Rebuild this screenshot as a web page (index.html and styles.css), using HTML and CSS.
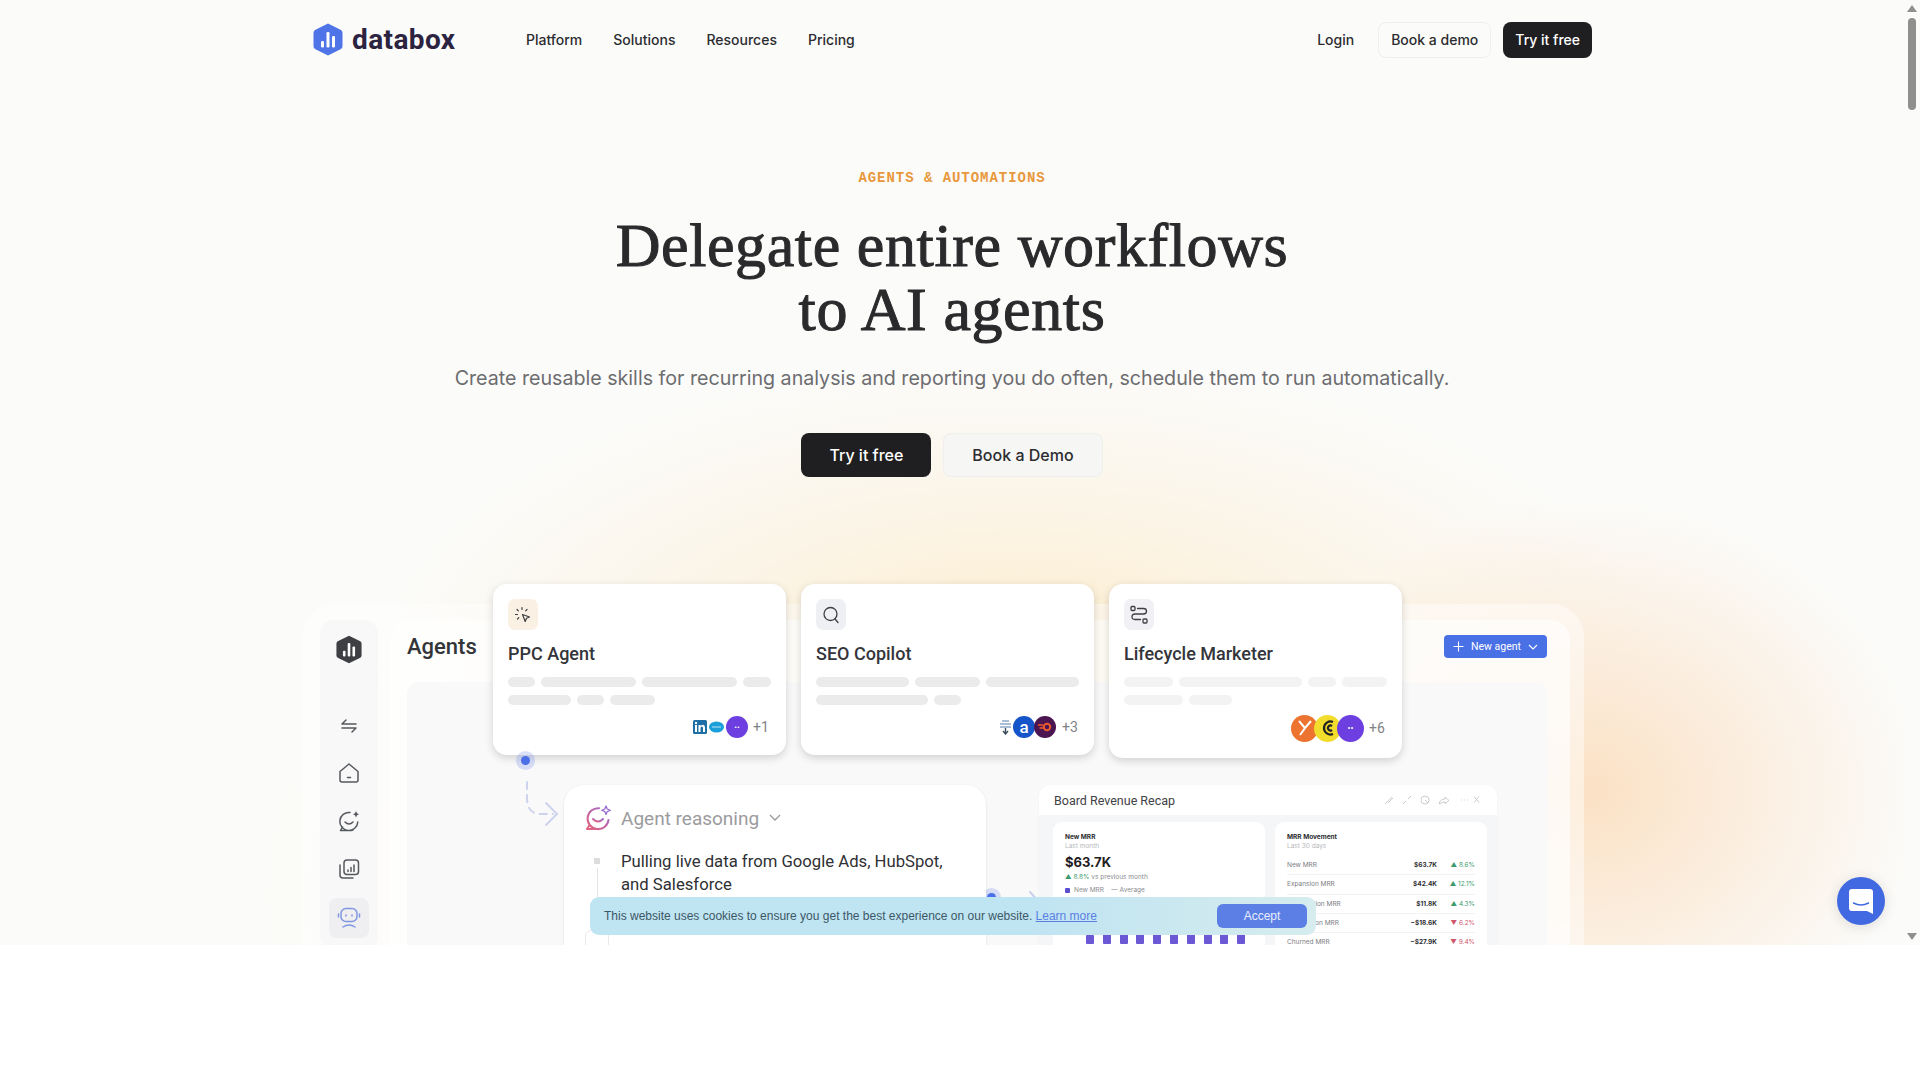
FILE: index.html
```html
<!DOCTYPE html>
<html lang="en">
<head>
  <meta charset="UTF-8" />
  <title>Databox - Agents &amp; Automations</title>
  <link rel="stylesheet" href="styles.css">
</head>
<body>
<div class="page">
  <div class="glow"></div>

  <div class="content">
    <!-- NAV -->
    <header class="nav">
      <a class="logo">
        <svg width="30" height="33" viewBox="0 0 30 33"><path d="M15 0.5 L28 7 Q29.5 8 29.5 10 V23 Q29.5 25 28 26 L15 32.5 L2 26 Q0.5 25 0.5 23 V10 Q0.5 8 2 7 Z" fill="#4f74e8"/><rect x="8" y="18" width="3" height="6.5" rx="1.2" fill="#fff"/><rect x="13.5" y="9" width="3" height="15.5" rx="1.2" fill="#fff"/><rect x="19" y="13" width="3" height="11.5" rx="1.2" fill="#fff"/></svg>
        <span>databox</span>
      </a>
      <nav class="nav-links">
        <a>Platform</a>
        <a>Solutions</a>
        <a>Resources</a>
        <a>Pricing</a>
      </nav>
      <div class="nav-right">
        <a class="login">Login</a>
        <a class="btn btn-ghost">Book a demo</a>
        <a class="btn btn-dark">Try it free</a>
      </div>
    </header>

    <!-- HERO -->
    <section class="hero">
      <div class="eyebrow">AGENTS &amp; AUTOMATIONS</div>
      <h1>Delegate entire workflows<br>to AI agents</h1>
      <p class="sub">Create reusable skills for recurring analysis and reporting you do often, schedule them to run automatically.</p>
      <div class="hero-btns">
        <a class="btn-big btn-dark">Try it free</a>
        <a class="btn-big btn-soft">Book a Demo</a>
      </div>
    </section>

    <!-- PRODUCT MOCK -->
    <section class="mock">
      <div class="mock-frame">
        <aside class="side">
          <svg class="side-logo" width="26" height="29" viewBox="0 0 30 33"><path d="M15 0.5 L28 7 Q29.5 8 29.5 10 V23 Q29.5 25 28 26 L15 32.5 L2 26 Q0.5 25 0.5 23 V10 Q0.5 8 2 7 Z" fill="#3d3f42"/><rect x="8" y="18" width="3" height="6.5" rx="1.2" fill="#fff"/><rect x="13.5" y="9" width="3" height="15.5" rx="1.2" fill="#fff"/><rect x="19" y="13" width="3" height="11.5" rx="1.2" fill="#fff"/></svg>
          <div class="side-icons">
            <svg width="20" height="20" viewBox="0 0 20 20" fill="none" stroke="#55585c" stroke-width="1.5" stroke-linecap="round" stroke-linejoin="round"><path d="M3 8h14M7 4L3 8M3 12h14M13 16l4-4"/></svg>
            <svg width="22" height="22" viewBox="0 0 22 22" fill="none" stroke="#55585c" stroke-width="1.5" stroke-linejoin="round" stroke-linecap="round"><path d="M2 9.5 L11 2 L20 9.5 V18 Q20 20 18 20 H4 Q2 20 2 18 Z"/><path d="M9.5 15.5h3"/></svg>
            <svg width="22" height="22" viewBox="0 0 22 22" fill="none" stroke="#55585c" stroke-width="1.5" stroke-linecap="round" stroke-linejoin="round"><path d="M12 2.5 A9 9 0 1 0 19.8 12 M2.5 20.5 H11 A9 9 0 0 0 15 20 M2.5 20.5 L4.5 17"/><path d="M7 12 Q11 16 15 12"/><path d="M18 1l1 2.2 2 1-2 1-1 2.2-1-2.2-2-1 2-1z" fill="#55585c" stroke="none"/></svg>
            <svg width="22" height="22" viewBox="0 0 22 22" fill="none" stroke="#55585c" stroke-width="1.5" stroke-linecap="round" stroke-linejoin="round"><rect x="6" y="2" width="14.5" height="14.5" rx="3"/><path d="M2 7v10q0 3 3 3h10"/><path d="M10 12v1.5M13 9.500v4M16 7v6.500"/></svg>
          </div>
          <div class="side-active">
            <svg width="24" height="24" viewBox="0 0 24 24" fill="none" stroke="#8197e0" stroke-width="1.5" stroke-linecap="round"><rect x="4" y="2.500" width="16" height="13" rx="5"/><path d="M1.500 8v3M22.500 8v3M6 21q6-4 12 0"/><path d="M9 9v1M15 9v1"/></svg>
          </div>
        </aside>
        <div class="mock-main">
          <div class="mock-head">
            <h2>Agents</h2>
            <a class="new-agent">
              <svg width="11" height="11" viewBox="0 0 11 11" stroke="#fff" stroke-width="1.1"><path d="M5.500 0.500v10M0.500 5.500h10"/></svg>
              New agent
              <svg width="10" height="6" viewBox="0 0 10 6" fill="none" stroke="#fff" stroke-width="1.100"><path d="M1 1l4 4 4-4"/></svg>
            </a>
          </div>
          <div class="mock-panel"></div>
        </div>
      </div>

      <!-- AGENT CARDS -->
      <div class="agent-row">
        <div class="agent">
          <div class="tile tile-orange">
            <svg width="18" height="18" viewBox="0 0 18 18" fill="none" stroke="#3d3f42" stroke-width="1.200" stroke-linecap="round" stroke-linejoin="round"><path d="M8.500 8.500l7 2.500-3 1.300-1.300 3.200z"/><path d="M8 1.500v2M3 3.500l1.300 1.300M1.500 8.500h2M13 3.500l-1.300 1.300M3.500 13l1.300-1.300"/></svg>
          </div>
          <h3>PPC Agent</h3>
          <div class="skel">
            <i class="w27"></i><i class="w95"></i><i class="w95"></i><i class="w28"></i>
            <i class="w63"></i><i class="w27"></i><i class="w45"></i>
          </div>
          <div class="sources">
            <svg class="ava-sq" width="14" height="14" viewBox="0 0 14 14"><rect width="14" height="14" rx="1.500" fill="#1d6fa5"/><rect x="2" y="5" width="2" height="7" fill="#fff"/><circle cx="3" cy="3" r="1.200" fill="#fff"/><path d="M5.500 5h2v1q1-1.200 2.500-1.200 2 0 2 2.700V12h-2V8q0-1.500-1.200-1.500T7.500 8v4h-2z" fill="#fff"/></svg>
            <svg class="ava-sq" width="15" height="12" viewBox="0 0 15 12"><ellipse cx="7.500" cy="6" rx="7.500" ry="5.500" fill="#1b9fd8"/><path d="M3 6h9" stroke="#bfe6f6" stroke-width="1"/></svg>
            <span class="ava ava-purple ava-sm">••</span>
          </div>
          <span class="more m1">+1</span>
        </div>

        <div class="agent">
          <div class="tile tile-gray">
            <svg width="18" height="18" viewBox="0 0 18 18" fill="none" stroke="#3d3f42" stroke-width="1.300" stroke-linecap="round"><circle cx="8.500" cy="8" r="6.500"/><path d="M13 13l3 3.500"/></svg>
          </div>
          <h3>SEO Copilot</h3>
          <div class="skel">
            <i class="w93"></i><i class="w65"></i><i class="w93"></i>
            <i class="w112"></i><i class="w27"></i>
          </div>
          <div class="sources">
            <svg class="ava-sq" width="13" height="16" viewBox="0 0 13 16"><path d="M3 2h7M1 5h11M1 8h11" stroke="#8fa8c8" stroke-width="1.300"/><path d="M6.500 9v5M4 12l2.500 3L9 12" stroke="#3d4a5c" stroke-width="1.400" fill="none"/></svg>
            <span class="ava ava-blue">a</span>
            <span class="ava ava-wine"><svg width="14" height="10" viewBox="0 0 14 10"><circle cx="9" cy="5" r="3.200" fill="none" stroke="#ef5a2d" stroke-width="2"/><path d="M0 3h5M1.500 6h4" stroke="#ef5a2d" stroke-width="1.300"/></svg></span>
          </div>
          <span class="more m3">+3</span>
        </div>

        <div class="agent agent-tall">
          <div class="tile tile-lilac">
            <svg width="18" height="20" viewBox="0 0 18 20" fill="none" stroke="#3d3f42" stroke-width="1.300"><rect x="1" y="1.500" width="4" height="4" rx="1"/><rect x="13" y="14" width="4" height="4" rx="1"/><path d="M7.500 3.500h6q3 0 3 2.700t-3 2.800H5q-3 0-3 2.800t3 2.700h5.500" stroke-linecap="round"/></svg>
          </div>
          <h3>Lifecycle Marketer</h3>
          <div class="skel skel-light">
            <i class="w49"></i><i class="w123"></i><i class="w28"></i><i class="w45"></i>
            <i class="w59"></i><i class="w43"></i>
          </div>
          <div class="sources big">
            <span class="ava ava-orange"><svg width="18" height="20" viewBox="0 0 18 20" stroke="#fff" stroke-width="2" fill="none"><path d="M3 3l6 7-5 7M15 3L9 10"/></svg></span>
            <span class="ava ava-yellow"><svg width="16" height="18" viewBox="0 0 16 18" fill="none" stroke="#222" stroke-width="2.200"><path d="M13 3a6.500 6.500 0 1 0 0 12"/><path d="M12 7a2.500 2.500 0 1 0 0 4"/></svg></span>
            <span class="ava ava-purple">••</span>
          </div>
          <span class="more m6">+6</span>
        </div>
      </div>

      <!-- CONNECTOR -->
      <span class="node node-a"></span>
      <span class="node node-b"></span>
      <svg class="connector" width="36" height="50" viewBox="0 0 36 50" fill="none" stroke="#cdd3ec" stroke-width="2" stroke-linecap="round"><path d="M3 2v16q0 16 14 16h12" stroke-dasharray="7 6"/><path d="M22 23l11 11-11 11"/></svg>
      <svg class="connector-b" width="14" height="24" viewBox="0 0 14 24" fill="none" stroke="#c9d0ea" stroke-width="2" stroke-linecap="round"><path d="M2 2l10 11"/></svg>

      <div class="flow-row">
        <!-- REASONING -->
        <div class="reasoning">
          <div class="reason-head">
            <svg width="26" height="26" viewBox="0 0 26 26" fill="none" stroke-width="2" stroke-linecap="round" stroke-linejoin="round"><defs><linearGradient id="rg" x1="0" y1="1" x2="1" y2="0"><stop offset="0" stop-color="#e6627a"/><stop offset="1" stop-color="#9a6bd0"/></linearGradient></defs><path d="M14 3.200 A10.500 10.500 0 1 0 23.500 15 M2 24 H13 A10.500 10.500 0 0 0 18 23 M2 24 L4.500 20" stroke="url(#rg)"/><path d="M8 14 Q13 19 18 14" stroke="url(#rg)"/><path d="M21 1l1.300 3 3 1.300-3 1.200-1.300 3-1.200-3-3-1.200 3-1.300z" stroke="#9a6bd0" stroke-width="1.300"/></svg>
            <span>Agent reasoning</span>
            <svg width="12" height="8" viewBox="0 0 12 8" fill="none" stroke="#9a9a9a" stroke-width="1.300"><path d="M1 1l5 5 5-5"/></svg>
          </div>
          <div class="step">
            <div class="step-mark"><span></span><em></em></div>
            <p>Pulling live data from Google Ads, HubSpot, and Salesforce</p>
          </div>
          <div class="step2"><span class="step-tile"></span></div>
        </div>

        <!-- DASHBOARD -->
        <div class="board">
          <div class="board-head">
            <span>Board Revenue Recap</span>
            <svg width="96" height="10" viewBox="0 0 96 10" fill="none" stroke="#c4c6c9" stroke-width="0.900"><path d="M1 9l7-7M4 8l5-5"/><path d="M19 9l3-3M27 1l-3 3"/><circle cx="41" cy="5" r="4"/><path d="M41 5l3 3"/><path d="M55 9q1-5 6-5V2l4 3.500-4 3V7q-3 0-6 2z"/><path d="M77 5h.8M80 5h.8M83 5h.8"/><path d="M90 1.500l5 6M95 1.500l-5 6"/></svg>
          </div>
          <div class="board-body">
            <div class="tile-card">
              <b class="tc-title">New MRR</b>
              <span class="tc-note">Last month</span>
              <strong>$63.7K</strong>
              <span class="tc-delta"><em>▲ 8.8%</em> vs previous month</span>
              <span class="tc-legend"><i></i>New MRR &nbsp;&nbsp; — Average</span>
              <div class="bars"><i class="first"></i><i></i><i></i><i></i><i></i><i></i><i></i><i></i><i></i><i></i></div>
            </div>
            <div class="tile-card">
              <b class="tc-title">MRR Movement</b>
              <span class="tc-note">Last 30 days</span>
              <div class="mrr">
                <div><span>New MRR</span><b>$63.7K</b><em class="up">▲ 8.6%</em></div>
                <div><span>Expansion MRR</span><b>$42.4K</b><em class="up">▲ 12.1%</em></div>
                <div><span>Reactivation MRR</span><b>$11.8K</b><em class="up">▲ 4.3%</em></div>
                <div><span>Contraction MRR</span><b>−$18.6K</b><em class="down">▼ 6.2%</em></div>
                <div><span>Churned MRR</span><b>−$27.9K</b><em class="down">▼ 9.4%</em></div>
              </div>
            </div>
          </div>
        </div>
      </div>
    </section>
  </div>

  <!-- COOKIE BAR -->
  <div class="cookie">
    <span>This website uses cookies to ensure you get the best experience on our website. <a>Learn more</a></span>
    <a class="accept">Accept</a>
  </div>

  <!-- CHAT -->
  <a class="chat">
    <svg width="24" height="25" viewBox="0 0 24 25"><path d="M3 0h18q3 0 3 3v22l-6-3H3q-3 0-3-3V3q0-3 3-3z" fill="#fff"/><path d="M4.500 14q7.500 4 15 0" fill="none" stroke="#4169e1" stroke-width="1.500" stroke-linecap="round"/></svg>
  </a>

  <!-- SCROLLBAR -->
  <div class="scrollbar">
    <span class="arrow-up"></span>
    <span class="thumb"></span>
    <span class="arrow-down"></span>
  </div>
</div>
</body>
</html>
```

FILE: styles.css
```css
* { box-sizing: border-box; margin: 0; padding: 0; }
html, body { background: #fff; }
body {
  font-family: Inter, "Noto Sans", sans-serif;
  color: #1f1f21;
  overflow: hidden;
}
a { color: inherit; text-decoration: none; }

.page {
  position: relative;
  width: 1920px;
  height: 945px;
  overflow: hidden;
  background: #fbfbf9;
}
.glow {
  position: absolute;
  inset: 0;
  background:
    radial-gradient(ellipse 330px 290px at 1590px 790px, rgba(251, 224, 194, .95), rgba(251, 230, 208, .6) 50%, rgba(251, 240, 228, 0) 100%),
    radial-gradient(ellipse 640px 300px at 1020px 660px, rgba(252, 234, 200, .95), rgba(252, 240, 218, .55) 50%, rgba(252, 245, 235, 0) 100%),
    radial-gradient(ellipse 760px 470px at 1000px 900px, rgba(252, 246, 232, .7), rgba(252, 246, 232, 0) 100%);
}
.content { position: relative; width: 1904px; }

/* NAV */
.nav {
  width: 1280px;
  margin: 0 auto;
  height: 79px;
  display: flex;
  align-items: center;
}
.logo { display: flex; align-items: center; gap: 9px; width: 214px; padding-left: 1px; }
.logo span {
  font-family: Roboto, sans-serif;
  font-size: 28px;
  font-weight: 700;
  color: #2b2340;
  letter-spacing: .4px;
}
.nav-links { display: flex; gap: 31px; font-size: 14px; font-weight: 500; color: #2c2c30; }
.nav-right { margin-left: auto; display: flex; align-items: center; font-size: 14px; font-weight: 500; color: #2c2c30; }
.login { margin-right: 24px; }
.btn {
  height: 36px;
  padding: 0 12px;
  border-radius: 8px;
  display: flex;
  align-items: center;
}
.btn-ghost { border: 1px solid #efefed; margin-right: 12px; }
.btn-dark { background: #1f1f21; color: #fff; }

/* HERO */
.hero { text-align: center; padding-top: 91px; }
.eyebrow {
  font-family: "Liberation Mono", monospace;
  font-size: 14px;
  line-height: 16px;
  letter-spacing: .96px;
  font-weight: 700;
  color: #e8983c;
}
h1 {
  font-family: "Liberation Serif", serif;
  font-size: 62px;
  font-weight: 400;
  line-height: 64px;
  letter-spacing: .6px;
  -webkit-text-stroke: 1px #2a2a2c;
  color: #2a2a2c;
  margin-top: 27px;
}
.sub { font-size: 19.650px; line-height: 28px; color: #6d6d70; margin-top: 23px; }
.hero-btns { display: flex; justify-content: center; gap: 12px; margin-top: 41px; }
.btn-big {
  height: 44px;
  padding: 0 28px;
  border-radius: 8px;
  font-size: 16px;
  font-weight: 500;
  display: flex;
  align-items: center;
}
.btn-soft { background: #f6f6f4; border: 1px solid #efefed; color: #2c2c30; }

/* MOCK */
.mock {
  position: relative;
  width: 1282px;
  margin: 127px 0 0 302px;
  font-family: Roboto, sans-serif;
}
.mock-frame {
  height: 380px;
  padding: 16px 14px 0 18px;
  display: flex;
  gap: 12px;
  border-radius: 32px 32px 0 0;
  background: rgba(255, 255, 255, .45);
}
.side {
  width: 58px;
  height: 330px;
  border-radius: 14px;
  background: #f8f8f9;
  display: flex;
  flex-direction: column;
  align-items: center;
  padding-top: 15px;
}
.side-icons { display: flex; flex-direction: column; align-items: center; gap: 26px; margin-top: 52px; }
.side-active {
  width: 40px;
  height: 40px;
  margin-top: 18px;
  border-radius: 8px;
  background: #efeff1;
  display: flex;
  align-items: center;
  justify-content: center;
}
.mock-main {
  flex: 1;
  background: rgba(255, 255, 255, .6);
  border-radius: 20px 20px 0 0;
  padding: 0 23px 0 17px;
}
.mock-head { height: 62px; padding-bottom: 9px; display: flex; align-items: center; justify-content: space-between; }
.mock-head h2 { font-size: 22px; font-weight: 500; color: #333538; }
.new-agent {
  width: 103px;
  height: 23px;
  border-radius: 4px;
  background: #4a70e6;
  color: #fff;
  font-size: 10.500px;
  display: flex;
  align-items: center;
  justify-content: center;
  gap: 7px;
}
.mock-panel { height: 300px; background: #f9f9f9; border-radius: 12px 12px 0 0; }

/* AGENT CARDS */
.agent-row {
  position: absolute;
  left: 191px;
  top: -20px;
  display: flex;
  align-items: flex-start;
  gap: 15px;
}
.agent {
  position: relative;
  width: 293px;
  height: 171px;
  padding: 15px 15px 0;
  background: #fff;
  border-radius: 14px;
  box-shadow: 0 3px 8px rgba(0, 0, 0, .16);
}
.agent-tall { height: 174px; }
.tile {
  width: 30px;
  height: 31px;
  border-radius: 7px;
  display: flex;
  align-items: center;
  justify-content: center;
}
.tile-orange { background: #fbf0e4; }
.tile-gray { background: #eef0f3; }
.tile-lilac { background: #f0f0f5; }
.agent h3 { font-size: 18px; font-weight: 500; color: #33353a; line-height: 22px; margin-top: 13px; }
.skel { display: flex; flex-wrap: wrap; gap: 8px 6px; margin-top: 12px; width: 264px; }
.skel i { display: block; height: 10px; border-radius: 5px; background: #ebebeb; }
.skel-light i { background: #f3f3f3; }
.w27 { width: 27px; }
.w28 { width: 28px; }
.w43 { width: 43px; }
.w45 { width: 45px; }
.w49 { width: 49px; }
.w59 { width: 59px; }
.w63 { width: 63px; }
.w65 { width: 65px; }
.w93 { width: 93px; }
.w95 { width: 95px; }
.w112 { width: 112px; }
.w123 { width: 123px; }
.sources {
  position: absolute;
  right: 38px;
  top: 132px;
  height: 22px;
  display: flex;
  align-items: center;
}
.sources.big { height: 28px; right: 38px; top: 130px; }
.ava-sq { margin-right: 2px; }
.ava {
  width: 22px;
  height: 22px;
  border-radius: 50%;
  margin-left: -1px;
  color: #fff;
  display: flex;
  align-items: center;
  justify-content: center;
  font-size: 8px;
  overflow: hidden;
}
.ava-sm { margin-left: 0; }
.sources.big .ava { width: 27px; height: 27px; margin-left: -4px; font-size: 9px; }
.ava-purple { background: #6d3fe0; }
.ava-blue { background: #1554c9; font-size: 17px; font-weight: 500; }
.ava-wine { background: #4a1550; }
.ava-orange { background: #ec7430; }
.ava-yellow { background: #f2dc2c; }
.more { position: absolute; top: 134px; font-size: 14px; color: #808286; line-height: 18px; }
.m1 { left: 260px; }
.m3 { left: 261px; }
.m6 { left: 260px; top: 135px; }

/* CONNECTORS */
.node {
  position: absolute;
  width: 9px;
  height: 9px;
  border-radius: 50%;
  background: #4a6fe6;
  box-shadow: 0 0 0 5px rgba(90, 120, 235, .22);
}
.node-a { left: 219px; top: 152px; }
.node-b { left: 685px; top: 289px; }
.connector { position: absolute; left: 222px; top: 176px; }
.connector-b { position: absolute; left: 726px; top: 286px; }

/* FLOW ROW */
.flow-row {
  position: absolute;
  left: 262px;
  top: 181px;
  display: flex;
  gap: 53px;
}
.reasoning {
  width: 422px;
  height: 180px;
  padding: 19px 20px 0 21px;
  background: #fff;
  border-radius: 20px 20px 0 0;
  box-shadow: 0 1px 3px rgba(0, 0, 0, .1);
}
.reason-head { display: flex; align-items: center; gap: 10px; font-size: 19px; color: #9b9b9e; height: 28px; }
.step { display: flex; gap: 21px; margin-top: 18px; }
.step-mark { width: 14px; display: flex; flex-direction: column; align-items: center; padding-top: 8px; margin-left: 5px; }
.step-mark span { width: 6px; height: 6px; background: #dcdcdc; }
.step-mark em { width: 1px; height: 40px; background: #e4e4e4; margin-top: 4px; }
.step p { font-size: 16.700px; line-height: 23px; color: #2f3033; width: 345px; margin-left: -4px; }
.step2 { margin-top: 22px; }
.step-tile { display: block; width: 24px; height: 24px; border: 1px solid #e9e9ea; border-radius: 6px; }

/* BOARD */
.board {
  width: 458px;
  height: 180px;
  background: #f5f6f8;
  border-radius: 12px 12px 0 0;
  overflow: hidden;
  box-shadow: 0 1px 2px rgba(0, 0, 0, .06);
}
.board-head {
  height: 30px;
  padding: 0 17px 0 15px;
  background: #fff;
  display: flex;
  align-items: center;
  justify-content: space-between;
  font-size: 12.500px;
  color: #404246;
}
.board-body { display: flex; gap: 10px; padding: 7px 10px 0 14px; }
.tile-card {
  flex: 1;
  height: 140px;
  padding: 11px 12px;
  background: #fff;
  border-radius: 9px;
  display: flex;
  flex-direction: column;
  font-family: Inter, sans-serif;
  font-size: 6.500px;
  color: #8a8c90;
}
.tc-title { color: #2c2d30; font-size: 6.500px; line-height: 9px; }
.tc-note { color: #b6b8bb; line-height: 9px; }
.tile-card strong { font-size: 13px; color: #1f2023; line-height: 17px; margin-top: 3px; }
.tc-delta { margin-top: 2px; line-height: 9px; }
.tc-delta em { font-style: normal; color: #3d9a6d; }
.tc-legend { margin-top: 4px; line-height: 9px; display: flex; align-items: center; }
.tc-legend i { width: 5px; height: 5px; margin-right: 4px; background: #5a4fcf; border-radius: 1px; }
.bars { display: flex; gap: 8.800px; align-items: flex-end; margin: 37px 0 0 21px; }
.bars i { width: 8px; height: 12px; background: #6a58d4; border-radius: 1px; }
.bars .first { height: 9px; }
.mrr { margin-top: 5px; }
.mrr div {
  height: 19.300px;
  display: flex;
  align-items: center;
  border-bottom: 1px solid #f3f3f4;
  color: #7b7d81;
}
.mrr span { flex: 1; }
.mrr b { color: #2c2d30; }
.mrr em { width: 38px; text-align: right; font-style: normal; }
.up { color: #3d9a6d; }
.down { color: #d0556a; }

/* COOKIE */
.cookie {
  position: absolute;
  left: 590px;
  top: 897px;
  width: 726px;
  height: 38px;
  padding: 0 9px 0 14px;
  border-radius: 9px;
  background: linear-gradient(90deg, #bfe4f2, #bfe4f2 60%, #d6ecee);
  display: flex;
  align-items: center;
  justify-content: space-between;
  font-family: "Liberation Sans", sans-serif;
  font-size: 12px;
  color: #3d5866;
}
.cookie span a { color: #5a7fe2; text-decoration: underline; }
.accept {
  width: 90px;
  height: 24px;
  border-radius: 6px;
  background: #5c7fe6;
  color: #e8eefc;
  display: flex;
  align-items: center;
  justify-content: center;
}

/* CHAT */
.chat {
  position: absolute;
  left: 1837px;
  top: 877px;
  width: 48px;
  height: 48px;
  border-radius: 50%;
  background: #4169e1;
  box-shadow: 0 2px 14px rgba(0, 0, 0, .12);
  display: flex;
  align-items: center;
  justify-content: center;
}

/* SCROLLBAR */
.scrollbar { position: absolute; right: 0; top: 0; width: 16px; height: 945px; background: #fbfbfa; }
.thumb { position: absolute; left: 4px; top: 18px; width: 8px; height: 92px; border-radius: 4px; background: #8f8f8f; }
.arrow-up, .arrow-down { position: absolute; left: 3px; width: 0; height: 0; border-left: 5px solid transparent; border-right: 5px solid transparent; }
.arrow-up { top: 5px; border-bottom: 7px solid #8f8f8f; }
.arrow-down { bottom: 5px; border-top: 7px solid #8f8f8f; }
```
